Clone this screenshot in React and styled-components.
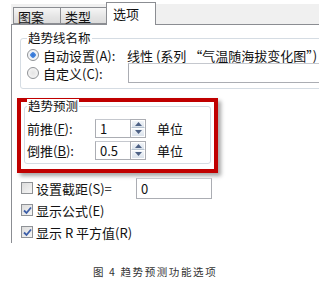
import React from 'react'
import styled, { createGlobalStyle } from 'styled-components'

const Global = createGlobalStyle`
  html, body {
    margin: 0;
    padding: 0;
    background: #fff;
  }
  body {
    font-family: "Noto Sans CJK SC", "Liberation Sans", sans-serif;
    font-size: 13px;
    line-height: 15px;
    color: #111;
  }
`

const Page = styled.div`
  width: 331px;
  height: 287px;
  overflow: hidden;
  padding-left: 11px;
  box-sizing: border-box;
`

const Dialog = styled.div`
  width: 308px;
  overflow: hidden;
`

const TabStrip = styled.div`
  display: flex;
  align-items: flex-end;
  height: 22px;
  margin-top: 2px;
  padding-left: 2px;
  background: linear-gradient(#fff 0, #fff 2px, #f0f0f0 2px);
  position: relative;
  z-index: 1;
`

const Tab = styled.div`
  box-sizing: border-box;
  width: ${p => p.$w}px;
  height: ${p => (p.$active ? 23 : 17)}px;
  margin-left: ${p => (p.$first ? 0 : -1)}px;
  margin-bottom: ${p => (p.$active ? -1 : 0)}px;
  padding: ${p => (p.$active ? '3px 0 0 6px' : '1px 0 0 4px')};
  border: 1px solid #8b8d92;
  border-bottom: ${p => (p.$active ? 'none' : '1px solid #8b8d92')};
  background: ${p => (p.$active ? '#fff' : 'linear-gradient(#f6f6f6, #e4e4e4 60%, #dcdcdc)')};
  font-size: 13px;
  line-height: 15px;
  color: #111;
`

const Panel = styled.div`
  box-sizing: border-box;
  height: 219px;
  border-top: 1px solid #8b8d92;
  border-left: 1px solid #8b8d92;
  background: #fff;
`

const Group = styled.div`
  box-sizing: border-box;
  border: 1px solid #d5dce3;
  border-radius: 3px;
  margin: ${p => p.$margin};
  width: ${p => p.$w}px;
  height: ${p => p.$h}px;
  padding-left: ${p => p.$pad}px;
`

const GroupTitle = styled.div`
  display: table;
  margin-top: -8px;
  padding: 0 1px;
  background: #fff;
  line-height: 14px;
  font-size: 12.5px;
`

const Row = styled.div`
  display: flex;
  align-items: center;
  height: ${p => p.$h}px;
  margin-top: ${p => p.$top || 0}px;
  white-space: nowrap;
`

const Radio = styled.span`
  box-sizing: border-box;
  flex: none;
  width: 12px;
  height: 12px;
  border-radius: 50%;
  border: 1px solid #8f9296;
  background: ${p =>
    p.$on
      ? 'radial-gradient(circle, #2f6fd0 0, #4b8ae0 2.5px, #e9eef5 3px, #f8f8f8 5px)'
      : 'radial-gradient(circle, #e4e4e4 0, #f4f4f4 5px)'};
  margin-right: 4px;
`

const Label = styled.span`
  display: inline-block;
  width: ${p => p.$w}px;
  flex: none;
`

const TextBox = styled.div`
  box-sizing: border-box;
  flex: none;
  width: ${p => p.$w}px;
  height: ${p => p.$h}px;
  border: 1px solid #abadb3;
  border-top-color: #c5c8ce;
  padding-left: 4px;
  line-height: ${p => p.$h - 2}px;
  font-size: 13px;
  background: #fff;
`

const Highlight = styled.div`
  box-sizing: border-box;
  width: 201px;
  height: 75px;
  margin: 9px 0 0 5px;
  border: 4px solid #c00000;
  box-shadow: 3px 3px 4px rgba(0, 0, 0, 0.35);
  padding-top: 4px;
  padding-left: 3px;
  background: #fff;
`

const Spin = styled.div`
  display: flex;
  flex: none;
`

const SpinButtons = styled.div`
  box-sizing: border-box;
  width: 16px;
  height: 19px;
  margin-left: -1px;
  border: 1px solid #abadb3;
  display: flex;
  flex-direction: column;
`

const SpinHalf = styled.div`
  flex: 1;
  display: flex;
  align-items: center;
  justify-content: center;
  background: linear-gradient(#f2f5f9, #dbe3ec);
  border: 1px solid #fff;
  border-bottom-color: #b7c3d0;
  &:last-child {
    border-bottom-color: #fff;
  }
`

const Unit = styled.span`
  margin-left: 11px;
`

const CheckBox = styled.span`
  box-sizing: border-box;
  flex: none;
  width: 12px;
  height: 12px;
  border: 1px solid #8f9296;
  background: linear-gradient(135deg, #dcdcdc, #f6f6f6);
  display: flex;
  align-items: center;
  justify-content: center;
  margin-right: 3px;
`

const Checks = styled.div`
  margin: 4px 0 0 9px;
`

const Caption = styled.div`
  margin: 22px 0 0 82px;
  font-size: 10.5px;
  letter-spacing: 1.6px;
  line-height: 14px;
  color: #333;
  white-space: nowrap;
`

function Arrow({ up }) {
  return (
    <svg width="7" height="4" viewBox="0 0 7 4">
      <path d={up ? 'M0 4 L3.5 0 L7 4 Z' : 'M0 0 L3.5 4 L7 0 Z'} fill="#4d6185" />
    </svg>
  )
}

function Check({ on }) {
  return (
    <CheckBox>
      {on && (
        <svg width="9" height="9" viewBox="0 0 9 9">
          <path d="M1 4.5 L3.5 7 L8 1.5" stroke="#3d5fa8" strokeWidth="1.8" fill="none" />
        </svg>
      )}
    </CheckBox>
  )
}

function SpinBox({ value }) {
  return (
    <Spin>
      <TextBox $w={36} $h={19}>{value}</TextBox>
      <SpinButtons>
        <SpinHalf><Arrow up /></SpinHalf>
        <SpinHalf><Arrow /></SpinHalf>
      </SpinButtons>
    </Spin>
  )
}

export default function App() {
  return (
    <Page>
      <Global />
      <Dialog>
        <TabStrip>
          <Tab $w={48} $first>图案</Tab>
          <Tab $w={47}>类型</Tab>
          <Tab $w={50} $active>选项</Tab>
        </TabStrip>
        <Panel>
          <Group $margin="13px -10px 0 8px" $w={310} $h={51} $pad={6}>
            <GroupTitle>趋势线名称</GroupTitle>
            <Row $h={16} $top={2}>
              <Radio $on />
              <Label $w={84}>自动设置(A):</Label>
              <span>线性 (系列 “气温随海拔变化图”)</span>
            </Row>
            <Row $h={20}>
              <Radio />
              <Label $w={85}>自定义(C):</Label>
              <TextBox $w={200} $h={20} />
            </Row>
          </Group>

          <Highlight>
            <Group $margin="0" $w={187} $h={58} $pad={2}>
              <GroupTitle>趋势预测</GroupTitle>
              <Row $h={22} $top={4}>
                <Label $w={68}>前推(<u>F</u>):</Label>
                <SpinBox value="1" />
                <Unit>单位</Unit>
              </Row>
              <Row $h={22}>
                <Label $w={68}>倒推(<u>B</u>):</Label>
                <SpinBox value="0.5" />
                <Unit>单位</Unit>
              </Row>
            </Group>
          </Highlight>

          <Checks>
            <Row $h={22}>
              <Check />
              <Label $w={100}>设置截距(S)=</Label>
              <TextBox $w={76} $h={21}>0</TextBox>
            </Row>
            <Row $h={22}>
              <Check on />
              <span>显示公式(E)</span>
            </Row>
            <Row $h={22}>
              <Check on />
              <span>显示 R 平方值(R)</span>
            </Row>
          </Checks>
        </Panel>
        <Caption>图 4 趋势预测功能选项</Caption>
      </Dialog>
    </Page>
  )
}
